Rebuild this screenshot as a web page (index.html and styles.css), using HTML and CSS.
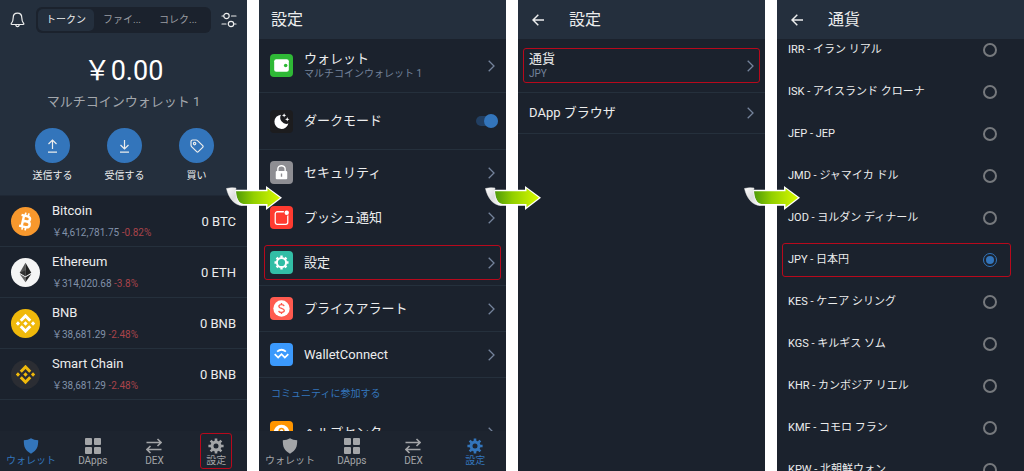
FILE: index.html
```html
<!DOCTYPE html>
<html lang="ja">
<head>
<meta charset="UTF-8">
<meta name="viewport" content="width=device-width, initial-scale=1.0">
<title>通貨の設定</title>
<link rel="stylesheet" href="styles.css">
</head>
<body>
  <svg width="0" height="0" class="sprite" aria-hidden="true">
    <defs>
      <linearGradient id="green" x1="0" x2="1" y1="0" y2="0">
        <stop offset="0" stop-color="#4f9a08"/>
        <stop offset="0.4" stop-color="#92cf00"/>
        <stop offset="1" stop-color="#d8fa00"/>
      </linearGradient>
      <linearGradient id="curl" x1="0" x2="1" y1="0" y2="1">
        <stop offset="0" stop-color="#ffffff"/>
        <stop offset="0.5" stop-color="#dcdcdc"/>
        <stop offset="1" stop-color="#ffffff"/>
      </linearGradient>
      <symbol id="i-shield" viewBox="0 0 16 16"><path fill="currentColor" d="M8 .3c2 1.300 4.400 1.900 7.200 2 0 6.400-.9 10-7.200 13.400C1.700 12.300.8 8.700.8 2.300 3.600 2.200 6 1.600 8 .3z"/></symbol>
      <symbol id="i-grid" viewBox="0 0 16 16"><g fill="currentColor"><rect x="0" y="0" width="7" height="7" rx="1"/><rect x="9" y="0" width="7" height="7" rx="1"/><rect x="0" y="9" width="7" height="7" rx="1"/><rect x="9" y="9" width="7" height="7" rx="1"/></g></symbol>
      <symbol id="i-swap" viewBox="0 0 16 16"><path fill="none" stroke="currentColor" stroke-width="1.600" d="M.5 4.500H15M11.500 1l3.500 3.500L11.500 8M15.500 11.500H1M4.500 8 1 11.500 4.500 15"/></symbol>
      <symbol id="i-gear" viewBox="0 0 16 16">
        <g fill="none" stroke="currentColor"><circle cx="8" cy="8" r="4" stroke-width="3"/><path stroke-width="2.600" d="M8 .4v2.600M8 13v2.600M.4 8H3M13 8h2.600M2.630 2.630l1.800 1.800M11.570 11.570l1.800 1.800M2.630 13.370l1.800-1.800M11.570 4.430l1.800-1.800"/></g>
      </symbol>
      <symbol id="i-chevron" viewBox="0 0 7 12"><path fill="none" stroke="currentColor" stroke-width="1.300" d="M.7.8 6 6 .7 11.200"/></symbol>
      <symbol id="i-back" viewBox="0 0 12 12"><path fill="none" stroke="currentColor" stroke-width="1.500" d="M12 6H1M6.300.7 1 6l5.300 5.300"/></symbol>
      <symbol id="i-bnb" viewBox="0 0 20 20"><path fill="currentColor" d="M10 0l6 6-2.200 2.200L10 4.400 6.200 8.200 4 6zM10 20l6-6-2.200-2.200L10 15.600l-3.800-3.800L4 14zM2.200 7.800 4.400 10l-2.200 2.200L0 10zM17.800 7.800 20 10l-2.200 2.200-2.200-2.200zM10 7.700l2.300 2.300-2.300 2.300L7.700 10z"/></symbol>
      <symbol id="i-arrow" viewBox="0 0 56 24">
        <path fill="#fff" d="M8 3.800h32V0l16 11.800L40 24v-4.300H17C11 19 8 14 8 3.800z"/>
        <path fill="url(#green)" d="M10 5.300h31.500V2.400l12.500 9.400-12.500 9.500V18H17.500C13 17.500 10.500 13 10 5.300z"/>
        <path fill="url(#curl)" stroke="#eee" stroke-width=".5" d="M.5 2.500Q5 1.200 10 2c-1.500 6 1 14 6.500 17.500C8 19.500 2.500 11.500.5 2.500z"/>
      </symbol>
    </defs>
  </svg>

  <main class="steps">
    <section class="panel">
      <header class="wallet-head">
        <div class="topbar">
          <button class="icon-btn" aria-label="通知"><svg width="15" height="16" viewBox="0 0 15 16" fill="none" stroke="currentColor" stroke-width="1.200" stroke-linejoin="round" stroke-linecap="round"><path d="M7.500 1.200c-3 0-4.300 2.200-4.300 4.500 0 3.500-1 4.500-2 6-.2.500 0 .8.500.8h11.600c.5 0 .7-.3.5-.8-1-1.500-2-2.500-2-6 0-2.300-1.300-4.500-4.300-4.500zM5.800 13.200c.4 2 3 2 3.400 0"/></svg></button>
          <div class="segments">
            <button class="active">トークン</button>
            <button>ファイ...</button>
            <button>コレク...</button>
          </div>
          <button class="icon-btn" aria-label="表示設定"><svg width="16" height="16" viewBox="0 0 16 16" fill="none" stroke="currentColor" stroke-width="1.200" stroke-linecap="round"><circle cx="5.500" cy="4" r="2.700"/><circle cx="10" cy="12" r="2.700"/><path d="M1 4h1.500M10.500 4H15M1 12h4M13 12h2"/></svg></button>
        </div>
        <p class="balance">￥0.00</p>
        <p class="wallet-name">マルチコインウォレット 1</p>
        <div class="actions">
          <button><span class="round"><svg width="13" height="14" viewBox="0 0 13 14" fill="none" stroke="currentColor" stroke-width="1.200"><path d="M6.500 10V1M2.500 5l4-4 4 4M2 13.200h9"/></svg></span>送信する</button>
          <button><span class="round"><svg width="13" height="14" viewBox="0 0 13 14" fill="none" stroke="currentColor" stroke-width="1.200"><path d="M6.500 1v9M2.500 6l4 4 4-4M2 13.200h9"/></svg></span>受信する</button>
          <button><span class="round"><svg width="14" height="14" viewBox="0 0 14 14" fill="none" stroke="currentColor" stroke-width="1.200" stroke-linejoin="round"><path d="M1 2.800Q1 1 2.800 1H6q1 0 1.800.8l4.900 4.900q.8.800 0 1.600l-4.400 4.400q-.8.800-1.600 0L1.800 7.800Q1 7 1 6z"/><circle cx="4.600" cy="4.600" r="1.200"/></svg></span>買い</button>
        </div>
      </header>
      <div class="body">
        <ul class="coins">
          <li>
            <svg class="coin" viewBox="0 0 30 30"><circle cx="15" cy="15" r="15" fill="#f8982d"/><g transform="rotate(13 15 15)" fill="none" stroke="#fff" stroke-width="2.500"><path d="M9.500 9.300h6.300c4.300 0 4.300 5.400 0 5.400h-3.300M12.200 9.300v11.400M9.500 20.700h6.800c4.900 0 4.900-6 0-6h-3.800"/><path stroke-width="1.800" d="M13.300 6v3.300M16.600 6v3.300M13.300 20.700V24M16.600 20.700V24"/></g></svg>
            <div class="coin-info"><h2>Bitcoin</h2><p>￥4,612,781.75 <span>-0.82%</span></p></div>
            <strong>0 BTC</strong>
          </li>
          <li>
            <svg class="coin" viewBox="0 0 30 30"><circle cx="15" cy="15" r="15" fill="#f5f5f5"/><path fill="#555" d="M15 5 9 15.300l6 3.500z"/><path fill="#222" d="M15 5l6 10.300-6 3.500zM15 12.600l6 2.700-6 3.500z"/><path fill="#333" d="M15 12.600 9 15.300l6 3.500z"/><path fill="#666" d="M9 16.500l6 3.500v5z"/><path fill="#222" d="M21 16.500 15 20v5z"/></svg>
            <div class="coin-info"><h2>Ethereum</h2><p>￥314,020.68 <span>-3.8%</span></p></div>
            <strong>0 ETH</strong>
          </li>
          <li>
            <svg class="coin bnb" viewBox="0 0 30 30"><circle cx="15" cy="15" r="15" fill="#f0b90b"/><use href="#i-bnb" x="5" y="5" width="20" height="20"/></svg>
            <div class="coin-info"><h2>BNB</h2><p>￥38,681.29 <span>-2.48%</span></p></div>
            <strong>0 BNB</strong>
          </li>
          <li>
            <svg class="coin smart" viewBox="0 0 30 30"><circle cx="15" cy="15" r="15" fill="#2b2d33"/><use href="#i-bnb" x="5" y="5" width="20" height="20"/></svg>
            <div class="coin-info"><h2>Smart Chain</h2><p>￥38,681.29 <span>-2.48%</span></p></div>
            <strong>0 BNB</strong>
          </li>
        </ul>
      </div>
      <nav class="tabs">
        <a href="#" class="active"><svg><use href="#i-shield"/></svg>ウォレット</a>
        <a href="#"><svg><use href="#i-grid"/></svg>DApps</a>
        <a href="#"><svg><use href="#i-swap"/></svg>DEX</a>
        <a href="#" class="marked"><svg><use href="#i-gear"/></svg>設定</a>
      </nav>
      <svg class="next"><use href="#i-arrow"/></svg>
    </section>

    <section class="panel">
      <header class="head"><h1>設定</h1></header>
      <div class="body">
        <ul class="menu">
          <li class="line tall"><a href="#">
            <svg class="tile green" viewBox="0 0 22 22"><rect x="4" y="5" width="14" height="12" rx="2" fill="#fff"/><circle cx="15" cy="11" r="1.700" fill="#2fb936"/></svg>
            <span class="label">ウォレット<small>マルチコインウォレット 1</small></span>
            <svg class="chevron"><use href="#i-chevron"/></svg></a></li>
          <li class="line taller"><label>
            <svg class="tile black" viewBox="0 0 22 22"><path fill="#fff" d="M10.500 4.500A6.800 6.800 0 1 0 17.600 13 6 6 0 0 1 10.500 4.500zM13.500 3l.6 1.500 1.500.6-1.500.6-.6 1.500-.6-1.500-1.500-.6 1.500-.6zM16.500 6.800l.6 1.500 1.500.6-1.500.6-.6 1.500-.6-1.500-1.500-.6 1.500-.6z"/></svg>
            <span class="label">ダークモード</span>
            <input type="checkbox" class="toggle" checked></label></li>
          <li><a href="#">
            <svg class="tile gray" viewBox="0 0 22 22"><rect x="5.500" y="9.500" width="11" height="8" rx="1" fill="#fff"/><path d="M7.500 10V7.500a3.500 3 0 0 1 7 0V10" fill="none" stroke="#fff" stroke-width="1.300"/><path stroke="#8e8e93" stroke-width="1.300" d="M11 12v3"/></svg>
            <span class="label">セキュリティ</span>
            <svg class="chevron"><use href="#i-chevron"/></svg></a></li>
          <li><a href="#">
            <svg class="tile red" viewBox="0 0 22 22"><rect x="5" y="5.500" width="12" height="12" rx="2" fill="none" stroke="#fff" stroke-width="1.200"/><circle cx="16" cy="6.500" r="2.900" fill="#ff3b30"/><circle cx="16" cy="6.500" r="2.100" fill="#fff"/></svg>
            <span class="label">プッシュ通知</span>
            <svg class="chevron"><use href="#i-chevron"/></svg></a></li>
          <li class="line"><a href="#" class="marked">
            <svg class="tile teal" viewBox="0 0 22 22"><g fill="none" stroke="#fff"><circle cx="11" cy="11" r="4.400" stroke-width="1.900"/><path stroke-width="2.300" d="M11 4.300v2M11 15.700v2M4.300 11h2M15.700 11h2M6.300 6.300l1.400 1.400M14.300 14.300l1.400 1.400M6.300 15.700l1.400-1.400M14.300 7.700l1.400-1.400"/></g></svg>
            <span class="label">設定</span>
            <svg class="chevron"><use href="#i-chevron"/></svg></a></li>
          <li class="line"><a href="#">
            <svg class="tile coral" viewBox="0 0 22 22"><circle cx="11" cy="11" r="7.800" fill="#fff"/><path fill="none" stroke="#ff5a4f" stroke-width="1.300" d="M13.500 8.700c-.4-1.900-5-1.900-5 .3 0 2.500 5.200 1.400 5.200 4 0 2.300-5 2.400-5.400.2M11 5.800v1.600M11 14.600v1.600"/></svg>
            <span class="label">プライスアラート</span>
            <svg class="chevron"><use href="#i-chevron"/></svg></a></li>
          <li class="line"><a href="#">
            <svg class="tile blue" viewBox="0 0 22 22"><path fill="none" stroke="#fff" stroke-width="1.700" d="M6.800 8.300q4.200-3.600 8.400 0M4.500 10.700l3.300 3.200L11 10.700l3.200 3.200 3.300-3.200"/></svg>
            <span class="label">WalletConnect</span>
            <svg class="chevron"><use href="#i-chevron"/></svg></a></li>
        </ul>
        <h2 class="group">コミュニティに参加する</h2>
        <ul class="menu">
          <li><a href="#">
            <svg class="tile orange" viewBox="0 0 22 22"><circle cx="11" cy="11" r="7.500" fill="#fff"/><path fill="none" stroke="#ff9500" stroke-width="1.500" d="M8.800 9.500c0-3 4.500-3 4.500-.2 0 1.500-2.200 1.700-2.200 3.500M11 14v1.500"/></svg>
            <span class="label">ヘルプセンター</span>
            <svg class="chevron"><use href="#i-chevron"/></svg></a></li>
        </ul>
      </div>
      <nav class="tabs">
        <a href="#"><svg><use href="#i-shield"/></svg>ウォレット</a>
        <a href="#"><svg><use href="#i-grid"/></svg>DApps</a>
        <a href="#"><svg><use href="#i-swap"/></svg>DEX</a>
        <a href="#" class="active"><svg><use href="#i-gear"/></svg>設定</a>
      </nav>
      <svg class="next"><use href="#i-arrow"/></svg>
    </section>

    <section class="panel">
      <header class="head"><button class="icon-btn back" aria-label="戻る"><svg width="12" height="12"><use href="#i-back"/></svg></button><h1>設定</h1></header>
      <div class="body">
        <ul class="menu">
          <li class="line tall"><a href="#" class="marked"><span class="label">通貨<small>JPY</small></span><svg class="chevron"><use href="#i-chevron"/></svg></a></li>
          <li class="line short"><a href="#"><span class="label">DApp ブラウザ</span><svg class="chevron"><use href="#i-chevron"/></svg></a></li>
        </ul>
      </div>
      <svg class="next"><use href="#i-arrow"/></svg>
    </section>

    <section class="panel">
      <header class="head"><button class="icon-btn back" aria-label="戻る"><svg width="12" height="12"><use href="#i-back"/></svg></button><h1>通貨</h1></header>
      <div class="body">
        <form class="currencies">
          <label>IRR - イラン リアル<input type="radio" name="currency"></label>
          <label>ISK - アイスランド クローナ<input type="radio" name="currency"></label>
          <label>JEP - JEP<input type="radio" name="currency"></label>
          <label>JMD - ジャマイカ ドル<input type="radio" name="currency"></label>
          <label>JOD - ヨルダン ディナール<input type="radio" name="currency"></label>
          <label class="marked">JPY - 日本円<input type="radio" name="currency" checked></label>
          <label>KES - ケニア シリング<input type="radio" name="currency"></label>
          <label>KGS - キルギス ソム<input type="radio" name="currency"></label>
          <label>KHR - カンボジア リエル<input type="radio" name="currency"></label>
          <label>KMF - コモロ フラン<input type="radio" name="currency"></label>
          <label>KPW - 北朝鮮ウォン<input type="radio" name="currency"></label>
        </form>
      </div>
    </section>
  </main>
</body>
</html>
```

FILE: styles.css
```css
* {
  box-sizing: border-box;
}
body {
  margin: 0;
  background-color: #fff;
  color: #eceded;
  font-family: Roboto, "Noto Sans CJK JP", sans-serif;
  font-size: 13px;
  line-height: 16px;
}
h1, h2, p, ul {
  margin: 0;
  padding: 0;
  font-weight: normal;
}
ul {
  list-style: none;
}
a {
  color: inherit;
  text-decoration: none;
}
button {
  padding: 0;
  border: none;
  background: none;
  color: inherit;
  font: inherit;
  cursor: pointer;
}
svg {
  display: block;
  flex: none;
}
.sprite {
  position: absolute;
}
.steps {
  display: grid;
  grid-template-columns: repeat(4, 1fr);
  gap: 12px;
  height: 100vh;
}
.panel {
  position: relative;
  display: flex;
  flex-direction: column;
  min-width: 0;
  min-height: 0;
  background-color: #1b222d;
}
.body {
  flex: 1;
  min-height: 0;
  overflow: hidden;
}
.next {
  position: absolute;
  top: 186px;
  right: -35px;
  z-index: 1;
  width: 56px;
  height: 24px;
}

/* wallet */
.wallet-head {
  padding: 7px 10px 11px;
  background-color: #242f3d;
  border-bottom: 1px solid #1f2835;
  text-align: center;
}
.topbar {
  display: flex;
  align-items: center;
  justify-content: space-between;
}
.segments {
  display: grid;
  grid-template-columns: repeat(3, 1fr);
  flex: 1;
  margin: 0 10px 0 11px;
  padding: 2px 5px 2px 2px;
  border-radius: 6px;
  background-color: #1b222d;
}
.segments button {
  height: 22px;
  border-radius: 5px;
  color: #9a9da2;
  font-size: 10px;
}
.segments .active {
  background-color: #242f3d;
  color: #eceded;
}
.balance {
  margin-top: 20px;
  font-size: 27px;
  line-height: 36px;
  color: #fff;
}
.wallet-name {
  margin-top: 5px;
  color: #a3a7ad;
}
.actions {
  display: grid;
  grid-template-columns: repeat(3, 72px);
  justify-content: center;
  margin-top: 18px;
  padding-left: 2px;
}
.actions button {
  display: flex;
  flex-direction: column;
  align-items: center;
  gap: 5px;
  font-size: 10px;
  line-height: 16px;
}
.round {
  display: flex;
  align-items: center;
  justify-content: center;
  width: 35px;
  height: 35px;
  border-radius: 50%;
  background-color: #3375bb;
}
.coins li {
  display: flex;
  align-items: center;
  gap: 12px;
  height: 51px;
  padding: 0 11px;
  border-bottom: 1px solid #25303c;
}
.coin {
  width: 29px;
  height: 29px;
}
.bnb {
  color: #fff;
}
.smart {
  color: #f0b90b;
}
.coin-info {
  flex: 1;
  padding-top: 2px;
}
.coin-info h2 {
  font-size: 13px;
}
.coin-info p {
  margin-top: 6px;
  font-size: 10px;
  color: #8191a9;
}
.coin-info span {
  color: #a8434a;
}
.coins strong {
  padding-top: 2px;
  font-weight: normal;
}

/* bottom tabs */
.tabs {
  display: grid;
  grid-template-columns: repeat(4, 1fr);
  justify-items: center;
  height: 40px;
  padding-top: 2px;
  background-color: #1d242f;
  color: #a3a5a8;
}
.tabs a {
  display: flex;
  flex-direction: column;
  align-items: center;
  height: 36px;
  padding: 4px 5px 0;
  border: 1px solid transparent;
  font-size: 10px;
  line-height: 14px;
  white-space: nowrap;
}
.tabs svg {
  width: 16px;
  height: 16px;
}
.tabs .active {
  color: #3375bb;
}

/* settings */
.head {
  display: flex;
  align-items: center;
  height: 39px;
  padding: 0 12px;
  background-color: #242f3d;
}
.head h1 {
  font-size: 16px;
}
.back {
  margin: 0 25px 0 2px;
}
.menu li {
  padding: 5px;
}
.menu .tall {
  padding: 9px 5px;
}
.line {
  border-bottom: 1px solid #25303c;
}
.menu a, .menu label {
  display: flex;
  align-items: center;
  height: 35px;
  padding: 0 5px;
  border: 1px solid transparent;
}
.menu .taller label {
  height: 46px;
  padding-right: 2px;
}
.menu .short a {
  height: 30px;
}
.menu .marked, .tabs .marked, .currencies .marked {
  border: 1px solid #b8091c;
  border-radius: 3px;
}
.label {
  flex: 1;
}
.label small {
  display: block;
  font-size: 10px;
  line-height: 14px;
  color: #74839b;
}
.chevron {
  width: 7px;
  height: 12px;
  color: #74839b;
}
.tile {
  width: 23px;
  height: 23px;
  margin-right: 11px;
  border-radius: 4px;
}
.green {
  background-color: #2fb936;
}
.black {
  background-color: #1c1c1e;
}
.gray {
  background-color: #8e8e93;
}
.red {
  background-color: #ff3b30;
}
.teal {
  background-color: #32bea6;
}
.coral {
  background-color: #ff5a4f;
}
.blue {
  background-color: #3b99fc;
}
.orange {
  background-color: #ff9500;
}
.group {
  padding: 8px 12px;
  font-size: 10px;
  color: #3375bb;
}
.toggle {
  appearance: none;
  display: flex;
  align-items: center;
  justify-content: flex-end;
  width: 22px;
  height: 10px;
  margin: 0;
  border-radius: 5px;
  background-color: #223f62;
}
.toggle::before {
  content: "";
  width: 14px;
  height: 14px;
  flex: none;
  border-radius: 50%;
  background-color: #3375bb;
}
.toggle:not(:checked) {
  justify-content: flex-start;
}

/* currency list, scrolled a little under the header */
.currencies {
  margin-top: -10px;
}
.currencies label {
  display: flex;
  align-items: center;
  justify-content: space-between;
  height: 34px;
  margin: 0 13px 8px 5px;
  padding: 0 13px 0 5px;
  border: 1px solid transparent;
  font-size: 11px;
}
.currencies label:first-child {
  margin-top: 4px;
}
.currencies input {
  appearance: none;
  display: flex;
  align-items: center;
  justify-content: center;
  width: 14px;
  height: 14px;
  margin: 0;
  border: 2px solid #76797d;
  border-radius: 50%;
}
.currencies input:checked {
  border: 1px solid #3375bb;
}
.currencies input:checked::before {
  content: "";
  width: 8px;
  height: 8px;
  flex: none;
  border-radius: 50%;
  background-color: #3375bb;
}
```
